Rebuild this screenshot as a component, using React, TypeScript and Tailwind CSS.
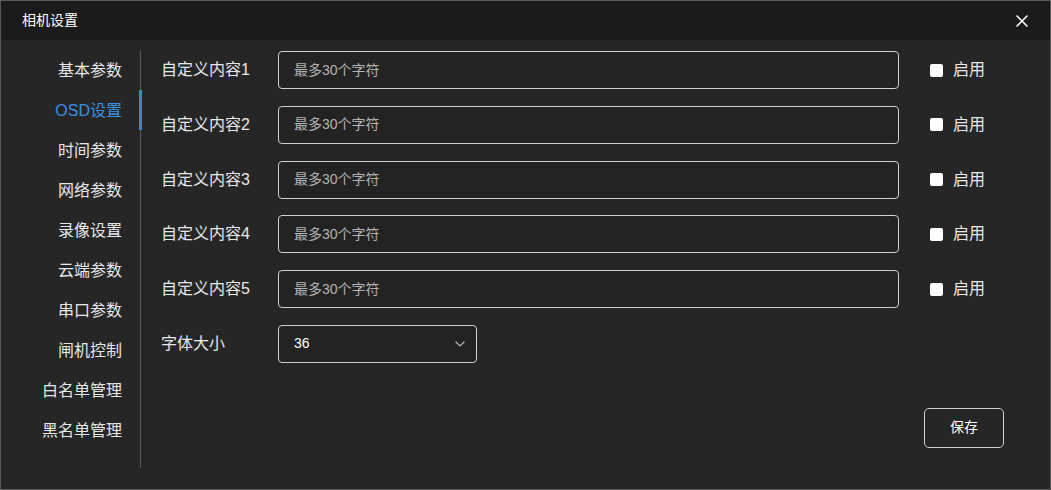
import React from "react";

const navItems = ["基本参数", "OSD设置", "时间参数", "网络参数", "录像设置", "云端参数", "串口参数", "闸机控制", "白名单管理", "黑名单管理"];

const font = { fontFamily: '"Liberation Sans", "Noto Sans CJK SC", sans-serif' };

function Row({ label }: { label: string }) {
  return (
    <div className="flex items-center h-[38px]">
      <div className="w-[117px] text-[16px] text-[#e8e8e8]">{label}</div>
      <div className="w-[621px] h-[38px] rounded-[4px] border border-[#cfcfcf] bg-[#232323] flex items-center pl-[15px] text-[14px] text-[#b4b4b4]">
        最多30个字符
      </div>
      <div className="flex items-center ml-[31px]">
        <div className="w-[13px] h-[13px] rounded-[2px] bg-white" />
        <span className="ml-[10px] text-[16px] text-[#e8e8e8]">启用</span>
      </div>
    </div>
  );
}

export default function App() {
  return (
    <div style={font} className="w-[1051px] h-[490px] bg-[#262626] border border-[#5a5a5a] flex flex-col overflow-hidden">
      <div className="h-[39px] bg-[#1b1b1b] flex items-center justify-between pl-[21px] pr-[22px] shrink-0">
        <span className="text-[14px] text-white">相机设置</span>
        <svg width="12" height="12" viewBox="0 0 12 12" className="text-white">
          <path d="M1 1L11 11M11 1L1 11" stroke="currentColor" strokeWidth="1.6" strokeLinecap="round" />
        </svg>
      </div>
      <div className="flex flex-1">
        <div className="w-[140px] mt-[10px] h-[418px] border-r border-[#5a5a5a] relative shrink-0">
          {navItems.map((n, i) => (
            <div
              key={n}
              className={
                "h-[40px] flex items-center justify-end pr-[18px] pt-[1px] text-[16px] relative " +
                (i === 1 ? "text-[#3d8fe0]" : "text-[#e8e8e8]")
              }
            >
              {n}
              {i === 1 && <div className="absolute right-[-2px] top-0 w-[3px] h-[40px] bg-[#3a87d4]" />}
            </div>
          ))}
        </div>
        <div className="flex-1 pl-[20px] pt-[11px] flex flex-col">
          <div className="flex flex-col gap-[16.8px]">
            {[1, 2, 3, 4, 5].map((k) => (
              <Row key={k} label={`自定义内容${k}`} />
            ))}
            <div className="flex items-center h-[38px]">
              <div className="w-[117px] text-[16px] text-[#e8e8e8]">字体大小</div>
              <div className="w-[199px] h-[38px] rounded-[4px] border border-[#cfcfcf] bg-[#232323] flex items-center justify-between pl-[15px] pr-[10px] text-[14px] text-white">
                <span>36</span>
                <svg width="12" height="8" viewBox="0 0 12 8">
                  <path d="M1.5 1.5L6 6L10.5 1.5" fill="none" stroke="#bbbbbb" strokeWidth="1.2" />
                </svg>
              </div>
            </div>
          </div>
          <div className="flex justify-end pr-[46px] mt-[45px]">
            <div className="w-[80px] h-[40px] rounded-[5px] border border-[#cfcfcf] flex items-center justify-center text-[14px] text-white">
              保存
            </div>
          </div>
        </div>
      </div>
    </div>
  );
}
